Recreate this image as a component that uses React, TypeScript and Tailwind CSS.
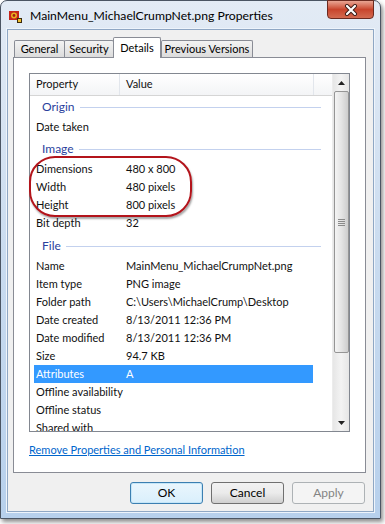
const font = "font-['Segoe_UI','Lato',sans-serif]";

type Row = { label: string; value?: string; selected?: boolean };

const origin: Row[] = [{ label: "Date taken" }];
const image: Row[] = [
  { label: "Dimensions", value: "480 x 800" },
  { label: "Width", value: "480 pixels" },
  { label: "Height", value: "800 pixels" },
  { label: "Bit depth", value: "32" },
];
const file: Row[] = [
  { label: "Name", value: "MainMenu_MichaelCrumpNet.png" },
  { label: "Item type", value: "PNG image" },
  { label: "Folder path", value: "C:\\Users\\MichaelCrump\\Desktop" },
  { label: "Date created", value: "8/13/2011 12:36 PM" },
  { label: "Date modified", value: "8/13/2011 12:36 PM" },
  { label: "Size", value: "94.7 KB" },
  { label: "Attributes", value: "A", selected: true },
  { label: "Offline availability" },
  { label: "Offline status" },
  { label: "Shared with" },
];

const Group = ({ title, className = "" }: { title: string; className?: string }) => (
  <div className={`h-[22px] shrink-0 flex items-center pl-[12px] pr-[11px] ${className}`}>
    <span className="text-[#2a3f9d] text-[12px]">{title}</span>
    <div className="flex-1 h-px bg-[#c3d1ee] ml-[5px]" />
  </div>
);

const Item = ({ row }: { row: Row }) => (
  <div
    className={`h-[18px] shrink-0 flex items-center ml-[4px] mr-[19px] pl-[2px] whitespace-nowrap ${
      row.selected ? "bg-[#3399ff] text-white" : "text-[#111]"
    }`}
  >
    <span className="w-[90px] shrink-0">{row.label}</span>
    <span>{row.value}</span>
  </div>
);

const Tab = ({ label, active, w }: { label: string; active?: boolean; w: string }) =>
  active ? (
    <div
      className={`${w} h-[21px] -mb-px relative z-10 bg-white border border-b-0 border-[#898c95] rounded-t-[2px] flex items-center justify-center whitespace-nowrap text-black`}
    >
      {label}
    </div>
  ) : (
    <div
      className={`${w} h-[17px] bg-gradient-to-b from-[#f3f3f3] to-[#dcdcdc] border border-b-0 border-[#898c95] rounded-t-[2px] flex items-center justify-center whitespace-nowrap text-black -mr-px`}
    >
      {label}
    </div>
  );

const Button = ({ label, primary, disabled }: { label: string; primary?: boolean; disabled?: boolean }) => (
  <div
    className={`w-[73px] h-[22px] rounded-[3px] border flex items-center justify-center text-[12px] ${
      disabled
        ? "border-[#adb2b5] bg-[#f4f4f4] text-[#838383]"
        : primary
        ? "border-[#3c7fb1] bg-gradient-to-b from-[#eaf6fd] to-[#d9effc] text-black shadow-[inset_0_0_0_1px_#c5e6f8]"
        : "border-[#707070] bg-gradient-to-b from-[#f2f2f2] via-[#ebebeb] to-[#cfcfcf] text-black"
    }`}
  >
    {label}
  </div>
);

export default function App() {
  return (
    <div className={`w-[385px] h-[524px] bg-white relative text-[11px] ${font}`}>
      <div className="w-[381px] h-[519px] rounded-t-[7px] border border-[#4b5563] bg-gradient-to-b from-[#e3ebf5] via-[#c9dbef] to-[#b7d0ec] shadow-[2px_3px_4px_rgba(0,0,0,0.45)] flex flex-col">
        {/* title bar */}
        <div className="h-[28px] flex items-start relative">
          <svg width="14" height="12" viewBox="0 0 14 12" className="ml-[8px] mt-[10px]">
            <rect x="0" y="0" width="10" height="9" fill="#c6241a" />
            <circle cx="5" cy="4.5" r="3" fill="#e7b020" />
            <circle cx="5" cy="4.5" r="1.4" fill="#a61b12" />
            <rect x="8" y="7" width="5" height="5" fill="#3a2a10" />
            <rect x="9" y="8" width="3" height="3" fill="#f0c030" />
          </svg>
          <span className="ml-[7px] mt-[6px] text-[12.2px] text-black">MainMenu_MichaelCrumpNet.png Properties</span>
          <div className="ml-auto mr-[6px] -mt-px w-[47px] h-[19px] rounded-b-[4px] border border-[#6b2a20] bg-gradient-to-b from-[#e8a493] via-[#c8442c] to-[#d36a50] flex items-center justify-center">
            <svg width="14" height="12" viewBox="0 0 14 12">
              <path d="M3 2 L11 10 M11 2 L3 10" stroke="#3a1a14" strokeWidth="4" strokeLinecap="round" />
              <path d="M3 2 L11 10 M11 2 L3 10" stroke="#ffffff" strokeWidth="2.2" strokeLinecap="round" />
            </svg>
          </div>
        </div>

        {/* client area */}
        <div className="mx-[6px] mb-[6px] flex-1 bg-[#f0f0f0] border border-[#8fa7c4] shadow-[0_0_0_1px_#eef4fb] flex flex-col pl-[5px] pr-[7px]">
          <div className="mt-[7px] flex items-end pl-[1px]">
            <Tab label="General" w="w-[51px]" />
            <Tab label="Security" w="w-[50px]" />
            <Tab label="Details" w="w-[48px]" active />
            <Tab label="Previous Versions" w="w-[92px]" />
          </div>
          <div className="h-[416px] bg-white border border-[#898c95] pt-[15px] px-[15px] flex flex-col">
            <div className="h-[359px] border border-[#828790] flex relative">
              <div className="flex-1 flex flex-col overflow-hidden">
                <div className="h-[22px] shrink-0 flex bg-gradient-to-b from-white to-[#f3f4f6] border-b border-[#d5d5d5] text-[#111]">
                  <div className="w-[90px] pl-[6px] flex items-center border-r border-[#e2e6ec]">Property</div>
                  <div className="w-[194px] pl-[6px] flex items-center border-r border-[#e2e6ec]">Value</div>
                  <div className="flex-1" />
                </div>
                <Group title="Origin" />
                {origin.map((r) => (
                  <Item key={r.label} row={r} />
                ))}
                <Group title="Image" className="mt-[2px]" />
                {image.map((r) => (
                  <Item key={r.label} row={r} />
                ))}
                <Group title="File" className="mt-[3px]" />
                {file.map((r) => (
                  <Item key={r.label} row={r} />
                ))}
              </div>
              {/* scrollbar */}
              <div className="w-[17px] shrink-0 bg-gradient-to-r from-[#e6e6e6] via-[#f3f3f3] to-[#e6e6e6] flex flex-col items-center border-l border-[#ececec]">
                <div className="h-[17px] w-full flex items-center justify-center">
                  <svg width="7" height="4" viewBox="0 0 7 4"><path d="M0 4 L3.5 0 L7 4 Z" fill="#222" /></svg>
                </div>
                <div className="w-[15px] h-[262px] rounded-[2px] border border-[#959595] bg-gradient-to-r from-[#f4f4f4] via-[#e4e4e4] to-[#cdcdcd] flex flex-col items-center justify-center gap-[1px]">
                  <div className="w-[7px] h-px bg-[#8a8a8a]" />
                  <div className="w-[7px] h-px bg-[#8a8a8a]" />
                  <div className="w-[7px] h-px bg-[#8a8a8a]" />
                  <div className="w-[7px] h-px bg-[#8a8a8a]" />
                </div>
                <div className="flex-1" />
                <div className="h-[17px] w-full flex items-center justify-center">
                  <svg width="7" height="4" viewBox="0 0 7 4"><path d="M0 0 L7 0 L3.5 4 Z" fill="#222" /></svg>
                </div>
              </div>
              {/* red highlight ring */}
              <div className="absolute left-[-1px] top-[82px] w-[163px] h-[61px] rounded-[26px] border-2 border-[#b3141b] shadow-[1px_2px_2px_rgba(0,0,0,0.35)] pointer-events-none" />
            </div>
            <div className="mt-[10px] text-[11px] text-[#0066cc] underline">Remove Properties and Personal Information</div>
          </div>
          <div className="mt-[9px] flex justify-end gap-[8px] pr-[1px]">
            <Button label="OK" primary />
            <Button label="Cancel" />
            <Button label="Apply" disabled />
          </div>
        </div>
      </div>
    </div>
  );
}
